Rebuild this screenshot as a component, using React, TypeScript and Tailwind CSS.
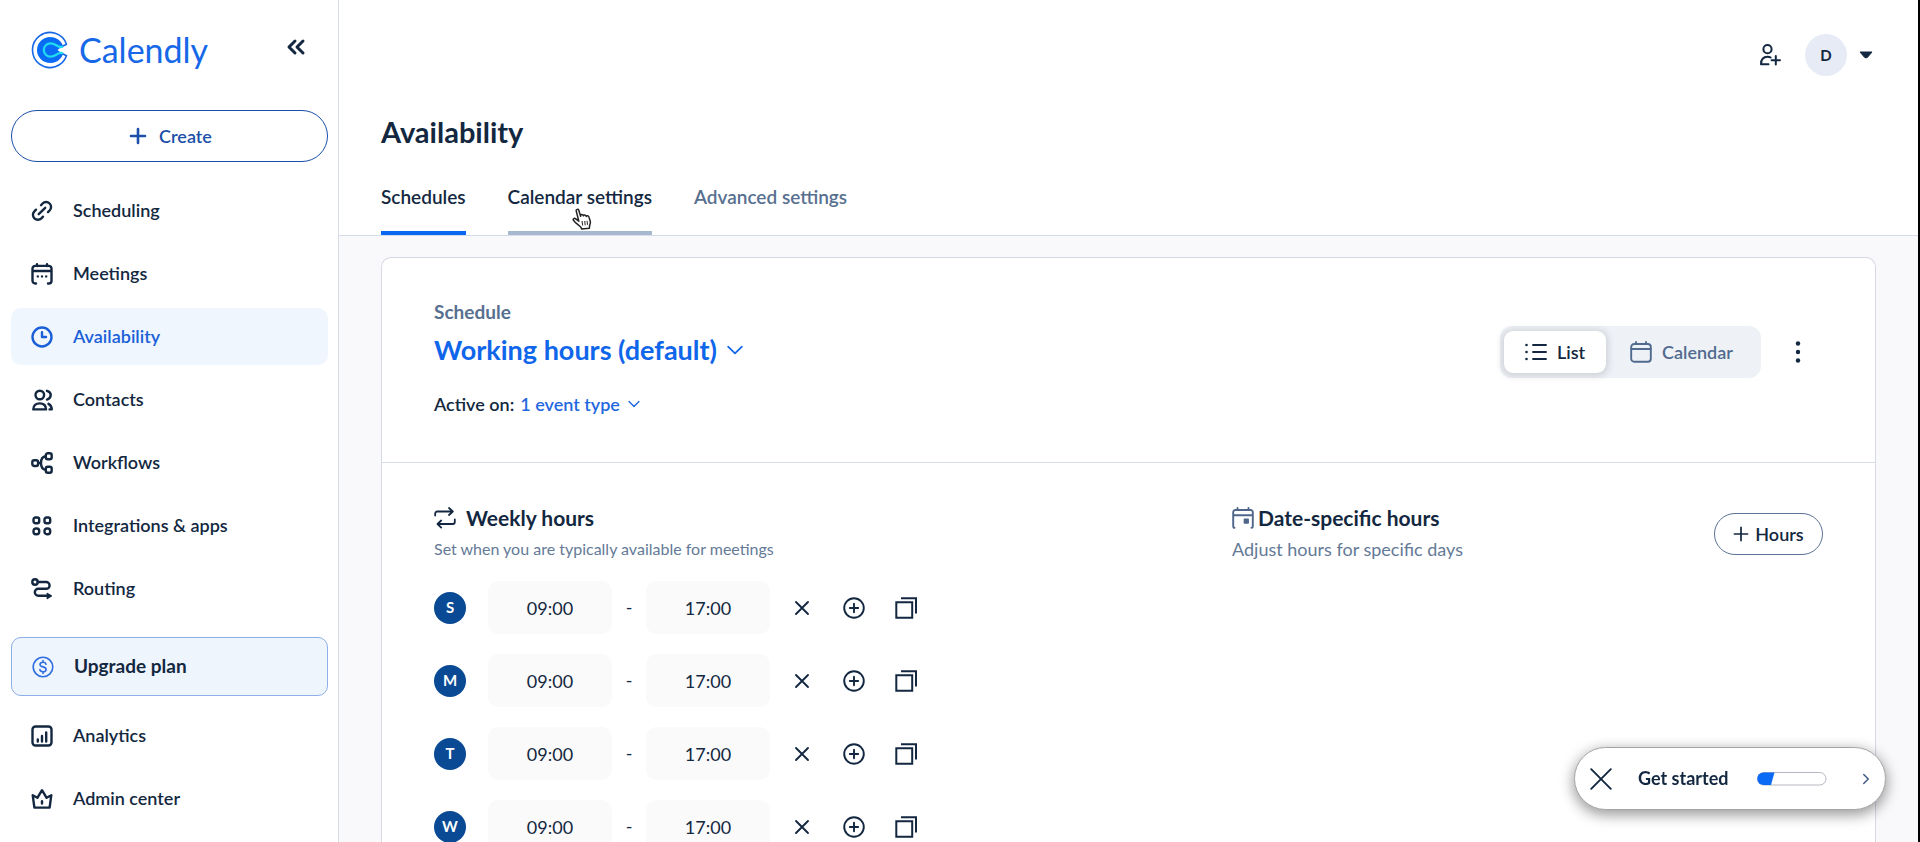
import React from 'react'
import { FiChevronRight } from 'react-icons/fi'

type IconProps = { children: React.ReactNode; className?: string; sw?: number }

function Icon({ children, className = 'size-[22px]', sw = 2.4 }: IconProps) {
  return (
    <svg
      viewBox="0 0 22 22"
      className={className}
      fill="none"
      stroke="currentColor"
      strokeWidth={sw}
      strokeLinecap="round"
      strokeLinejoin="round"
      aria-hidden="true"
    >
      {children}
    </svg>
  )
}

const mainLinks = [
  {
    label: 'Scheduling',
    icon: (
      <>
        <path d="M10 5.2l1.6-1.7a4.9 4.9 0 0 1 7 0a4.9 4.9 0 0 1 0 7l-1.6 1.6" />
        <path d="M5 9.7l-1.6 1.6a4.9 4.9 0 0 0 0 7a4.9 4.9 0 0 0 7 0l1.6-1.6" />
        <path d="M7.7 14.2l6.5-6.4" />
      </>
    ),
  },
  {
    label: 'Meetings',
    icon: (
      <>
        <path d="M5 20.5H4.2A2.7 2.7 0 0 1 1.5 17.8V5.6A2.7 2.7 0 0 1 4.2 2.9H17.8A2.7 2.7 0 0 1 20.5 5.6V17.8A2.7 2.7 0 0 1 17.8 20.5H17M1.5 8H20.5M6 1.3V3M16 1.3V3" />
        <path d="M6.8 13.4h.01M11 13.4h.01M15.2 13.4h.01" />
      </>
    ),
  },
  {
    label: 'Availability',
    icon: (
      <>
        <circle cx="11" cy="11" r="9.5" />
        <path d="M11 6.2V11H15" />
      </>
    ),
  },
  {
    label: 'Contacts',
    icon: (
      <>
        <circle cx="8.8" cy="6" r="4.3" />
        <path d="M2.3 20.4C2.3 16.4 5 14.4 8.7 14.4S15 16.4 15 20.4Z" />
        <path d="M16 1.8C21 3.2 21 8.8 16 10.6M17.5 14.8C19.6 15.8 20.6 17.6 20.8 20.4H18.6" />
      </>
    ),
  },
  {
    label: 'Workflows',
    icon: (
      <>
        <rect x="1.3" y="8.2" width="5.8" height="5.8" rx="2" />
        <rect x="14.8" y="1.3" width="5.9" height="5.9" rx="2" />
        <rect x="14.8" y="14.8" width="5.9" height="5.9" rx="2" />
        <path d="M14.8 4.2C11.4 4.5 10 6.4 10 11S11.4 17.5 14.8 17.8M7.1 11H10" />
      </>
    ),
  },
  {
    label: 'Integrations & apps',
    icon: (
      <>
        <rect x="2.5" y="2.5" width="5.7" height="5.7" rx="2" />
        <rect x="13.5" y="2.5" width="5.7" height="5.7" rx="2" />
        <rect x="2.5" y="13.5" width="5.7" height="5.7" rx="2.4" />
        <rect x="13.5" y="13.5" width="5.7" height="5.7" rx="2.4" />
      </>
    ),
  },
  {
    label: 'Routing',
    icon: (
      <>
        <circle cx="4" cy="4" r="2.7" />
        <path d="M6.8 4H15.2A3.4 3.4 0 0 1 15.2 10.8H7.3A3.5 3.5 0 0 0 7.3 17.8H18" />
        <path d="M16.3 15.5L20.3 17.9L16.3 20.5Z" fill="currentColor" strokeWidth="1.4" />
      </>
    ),
  },
]

const moreLinks = [
  {
    label: 'Analytics',
    icon: (
      <>
        <rect x="1.5" y="1.5" width="19" height="19" rx="3" />
        <path d="M6.8 14.5V16.5M11 11V16.5M15.2 7.5V16.5" />
      </>
    ),
  },
  {
    label: 'Admin center',
    icon: (
      <>
        <path d="M1.7 7.2L6.4 9.8L11 2.2L15.6 9.8L20.3 7.2L18.6 19.6H3.4Z" />
        <path d="M11 13.3V15.5" />
      </>
    ),
  },
]

const days = [
  { letter: 'S', name: 'Sunday' },
  { letter: 'M', name: 'Monday' },
  { letter: 'T', name: 'Tuesday' },
  { letter: 'W', name: 'Wednesday' },
]

function NavLink({ label, icon }: { label: string; icon: React.ReactNode }) {
  const active = label === 'Availability'
  return (
    <a
      href="#"
      className={
        active
          ? 'flex h-[57px] items-center gap-5 rounded-[10px] bg-[#eff6fe] pl-5 text-[18px] font-semibold text-[#1a5fd8]'
          : 'flex h-[57px] items-center gap-5 rounded-[10px] pl-5 text-[18px] font-semibold text-[#132840]'
      }
    >
      <Icon>{icon}</Icon>
      {label}
    </a>
  )
}

function Sidebar() {
  return (
    <aside className="w-[339px] shrink-0 border-r border-[#d6dde6] pr-[10px] pl-[11px]">
      <div className="flex h-[110px] items-start justify-between pt-[30px] pr-[22px] pl-5">
        <a href="#" className="flex items-center gap-[10px] text-[#1668e8]">
          <svg viewBox="0 0 38 38" className="size-[38px]" fill="none" aria-hidden="true">
            <path
              d="M35.5 13.2A17.5 17.5 0 1 0 35.5 24.8L31.5 22.8C29.6 27.5 25.2 31 19.5 31A12 12 0 0 1 19.5 7C25.2 7 29.6 10.5 31.5 15.2Z"
              fill="#fff"
              stroke="#1668e8"
              strokeWidth="1.6"
              strokeLinejoin="round"
            />
            <path
              d="M27.5 9.6A12.8 12.8 0 1 0 27.5 28.4C29.8 26.4 30.9 24.6 31.5 22.8L26.5 19L31.5 15.2C30.9 13.4 29.8 11.6 27.5 9.6Z"
              fill="#0a6bf5"
            />
            <path
              d="M32 15.6C27 18 25.5 12.3 19.5 12.3A6.7 6.7 0 0 0 19.5 25.7C25.5 25.7 27 20 32 22.4"
              stroke="#1fdcf0"
              strokeWidth="2.2"
            />
          </svg>
          <span className="text-[34px] leading-10">Calendly</span>
        </a>
        <button type="button" aria-label="Collapse menu" className="mt-[6px] text-[#132840]">
          <Icon sw={3}>
            <path d="M11 5L5 11L11 17M19 5L13 11L19 17" />
          </Icon>
        </button>
      </div>
      <button
        type="button"
        className="flex h-[52px] w-full items-center justify-center gap-[10px] rounded-full border border-[#1b4fa8] text-[18px] font-semibold text-[#1b4fa8]"
      >
        <Icon sw={2.6}>
          <path d="M11 4V18M4 11H18" />
        </Icon>
        Create
      </button>
      <nav className="mt-5 flex flex-col gap-[6px]">
        {mainLinks.map((l) => (
          <NavLink key={l.label} label={l.label} icon={l.icon} />
        ))}
      </nav>
      <a
        href="#"
        className="mt-5 flex h-[59px] items-center gap-5 rounded-[10px] border border-[#8eaee8] bg-[#eff5fd] pl-5 text-[19px] font-bold text-[#132840]"
      >
        <span className="text-[#2f6fe0]">
          <Icon sw={1.6}>
            <circle cx="11" cy="11" r="9.8" />
            <path d="M14 8.2C13.6 6.8 12.5 6.3 11 6.3C9.2 6.3 8 7.2 8 8.6C8 10.2 9.4 10.6 11 10.9S14.1 11.7 14.1 13.4C14.1 14.9 12.8 15.7 11 15.7S8.1 15.1 7.9 13.6M11 4.6V6.3M11 15.7V17.4" />
          </Icon>
        </span>
        Upgrade plan
      </a>
      <nav className="mt-[11px] flex flex-col gap-[6px]">
        {moreLinks.map((l) => (
          <NavLink key={l.label} label={l.label} icon={l.icon} />
        ))}
      </nav>
    </aside>
  )
}

function PageHeader() {
  return (
    <header className="border-b border-[#d6dde9] bg-white pr-[45px] pl-[42px]">
      <div className="flex h-[110px] items-center justify-end gap-6">
        <button type="button" aria-label="Invite user" className="text-[#132840]">
          <Icon sw={2}>
            <circle cx="8.5" cy="5.2" r="4.1" />
            <path d="M9.5 20.3H2C2 15 4.8 12.8 8.5 12.8C9.8 12.8 10.8 13 11.6 13.5M16.8 12V20.4M12.6 16.2H21" />
          </Icon>
        </button>
        <button type="button" className="flex items-center gap-3 text-[15px] font-bold text-[#132840]">
          <span className="flex size-[42px] items-center justify-center rounded-full bg-[#e6ebf5]">D</span>
          <svg viewBox="0 0 14 8" className="h-2 w-[14px]" aria-hidden="true">
            <path d="M1 1H13L8.5 6.3Q7 7.5 5.5 6.3Z" fill="currentColor" stroke="currentColor" />
          </svg>
        </button>
      </div>
      <h1 className="h-[44px] text-[29px] leading-[44px] font-bold text-[#132840]">Availability</h1>
      <div role="tablist" className="flex h-[81px] items-end gap-[42px] text-[19px] leading-6 font-semibold">
        <button type="button" role="tab" aria-selected="true" className="border-b-4 border-[#0a69f0] pb-[22px] text-[#132840]">
          Schedules
        </button>
        <button type="button" role="tab" aria-selected="false" className="relative border-b-4 border-[#a6b8d0] pb-[22px] text-[#132840]">
          Calendar settings
          <svg viewBox="0 0 20 22" className="absolute top-[23px] left-[64px] h-[22px] w-5" aria-hidden="true">
            <path
              d="M6.8 13.2L4.2 2.9C3.8 1.3 6.2.6 6.8 2.2L8.6 8.2C8.3 6.3 10.9 6 11.4 7.8C11.6 6.5 13.8 6.6 14.2 8.4C14.6 7.3 16.6 7.5 17 9.2L18.3 13.5C18.7 15.4 17.8 16.8 17.5 18L17.4 20.2L9.6 21L9 19.2C7.4 17.8 4.9 15.6 3.2 14.3L1.4 12.2C.6 10.8 2.3 9.8 3.8 10.8Z"
              fill="#fff"
              stroke="#222"
              strokeWidth="1.5"
              strokeLinejoin="round"
            />
            <path d="M10 13L10.7 17.5M12.7 13L13.2 17.3M15 12.8L15.5 16.8" stroke="#222" strokeWidth="1" />
          </svg>
        </button>
        <button type="button" role="tab" aria-selected="false" className="border-b-4 border-transparent pb-[22px] text-[#58708f]">
          Advanced settings
        </button>
      </div>
    </header>
  )
}

function ScheduleHead() {
  return (
    <div className="flex items-start justify-between border-b border-[#d9dde6] pt-[42px] pr-[66px] pb-[44px] pl-[52px]">
      <div>
        <p className="text-[19px] leading-6 font-bold text-[#58708f]">Schedule</p>
        <button type="button" className="mt-2 flex items-center gap-[10px] text-[27px] leading-9 font-bold text-[#0f66ea]">
          Working hours (default)
          <Icon className="size-4" sw={2.4}>
            <path d="M1.5 6.5L11 15.5L20.5 6.5" />
          </Icon>
        </button>
        <p className="mt-[22px] flex items-center gap-[6px] text-[18px] leading-7 font-semibold text-[#132840]">
          Active on:
          <button type="button" className="flex items-center gap-2 text-[#1f68e0]">
            1 event type
            <Icon className="size-3" sw={2.6}>
              <path d="M2 6.5L11 15.5L20 6.5" />
            </Icon>
          </button>
        </p>
      </div>
      <div className="mt-[26px] flex items-center gap-[26px]">
        <div className="flex h-[52px] w-[261px] items-center rounded-[12px] bg-[#eef1f6] p-1 text-[18px] font-semibold">
          <button
            type="button"
            className="flex h-[42px] w-[102px] items-center justify-center gap-[10px] rounded-[9px] bg-white text-[#132840] shadow-[0_1px_7px_2px_rgba(60,60,70,0.18)]"
          >
            <Icon sw={1.9}>
              <path d="M8 4H21M8 11H21M8 18H21" />
              <path d="M1.5 4H1.51M1.5 11H1.51M1.5 18H1.51" strokeWidth="2.6" />
            </Icon>
            List
          </button>
          <button type="button" className="flex flex-1 items-center justify-center gap-[10px] text-[#506b8e]">
            <Icon sw={1.9}>
              <rect x="1.2" y="3" width="19.6" height="17.8" rx="3" />
              <path d="M1.2 8H20.8M6 1V3M16 1V3" />
            </Icon>
            Calendar
          </button>
        </div>
        <button type="button" aria-label="More options" className="text-[#132840]">
          <svg viewBox="0 0 22 22" className="size-[22px]" fill="currentColor" aria-hidden="true">
            <circle cx="11" cy="2.5" r="2.2" />
            <circle cx="11" cy="11" r="2.2" />
            <circle cx="11" cy="19.5" r="2.2" />
          </svg>
        </button>
      </div>
    </div>
  )
}

function DayRow({ letter, name }: { letter: string; name: string }) {
  return (
    <li className="flex h-[53px] items-center text-[#132840]">
      <span className="mr-[22px] flex size-8 items-center justify-center rounded-full bg-[#0a4a94] text-[15px] font-bold text-white">
        {letter}
      </span>
      <input
        aria-label={name + ' start'}
        defaultValue="09:00"
        className="h-[53px] w-[124px] rounded-[10px] bg-[#fafafb] text-center text-[18px]"
      />
      <span className="w-[34px] text-center text-[18px]">-</span>
      <input
        aria-label={name + ' end'}
        defaultValue="17:00"
        className="h-[53px] w-[124px] rounded-[10px] bg-[#fafafb] text-center text-[18px]"
      />
      <div className="ml-[21px] flex gap-[30px]">
        <button type="button" aria-label={'Remove ' + name + ' hours'}>
          <Icon sw={1.9}>
            <path d="M5 5L17 17M17 5L5 17" />
          </Icon>
        </button>
        <button type="button" aria-label={'Add ' + name + ' hours'}>
          <Icon sw={1.9}>
            <circle cx="11" cy="11" r="9.8" />
            <path d="M11 6.8V15.2M6.8 11H15.2" />
          </Icon>
        </button>
        <button type="button" aria-label={'Copy ' + name + ' hours'}>
          <Icon sw={2}>
            <path d="M1.3 5.2H17.2V20.8H1.3ZM6 1.3H21V16.5" strokeLinecap="butt" strokeLinejoin="miter" />
          </Icon>
        </button>
      </div>
    </li>
  )
}

function Hours() {
  return (
    <div className="grid grid-cols-[798fr_591fr] px-[52px] pt-[39px]">
      <section>
        <h2 className="flex items-center gap-[10px] text-[21px] leading-8 font-bold text-[#132840]">
          <Icon sw={1.8}>
            <path d="M1.2 8.5V6.5A2 2 0 0 1 3.2 4.5H18.5M15 1L18.8 4.5L15 8M20.8 12.5V15A2 2 0 0 1 18.8 17H3.8M7.2 13.5L3.5 17L7.2 20.6" />
          </Icon>
          Weekly hours
        </h2>
        <p className="mt-[3px] text-[16px] leading-6 text-[#647a97]">
          Set when you are typically available for meetings
        </p>
        <ul className="mt-5 flex flex-col gap-5">
          {days.map((d) => (
            <DayRow key={d.name} letter={d.letter} name={d.name} />
          ))}
        </ul>
      </section>
      <section className="flex items-start justify-between">
        <div>
          <h2 className="flex items-center gap-1 text-[21px] leading-8 font-bold text-[#132840]">
            <span className="text-[#4d668a]">
              <Icon sw={1.9}>
                <path d="M2.5 20.8Q1.2 20.8 1.2 19V5.2A2.2 2.2 0 0 1 3.4 3H18.6A2.2 2.2 0 0 1 20.8 5.2V19Q20.8 20.8 19.5 20.8M1.2 8.3H20.8M5.5 1V3M16.5 1V3" />
                <rect x="12.6" y="12.4" width="3.4" height="3.4" fill="currentColor" />
              </Icon>
            </span>
            Date-specific hours
          </h2>
          <p className="mt-[3px] text-[18px] leading-6 text-[#647a97]">Adjust hours for specific days</p>
        </div>
        <button
          type="button"
          className="mt-[11px] flex h-[42px] w-[109px] items-center justify-center gap-[6px] rounded-full border border-[#5b7394] text-[18px] font-semibold text-[#132840]"
        >
          <Icon className="size-4" sw={2.4}>
            <path d="M11 2V20M2 11H20" />
          </Icon>
          Hours
        </button>
      </section>
    </div>
  )
}

function GetStarted() {
  return (
    <div className="fixed right-[34px] bottom-[32px] flex h-[63px] w-[312px] items-center rounded-full border border-[#a5a5a8] bg-white pr-[10px] pl-[15px] text-[#132840] shadow-[0_4px_14px_1px_rgba(0,0,0,0.4)]">
      <button type="button" aria-label="Dismiss">
        <Icon sw={1.9}>
          <path d="M1.2 1.2L20.8 20.8M20.8 1.2L1.2 20.8" />
        </Icon>
      </button>
      <span className="ml-[26px] w-[119px] text-[18px] font-bold">Get started</span>
      <svg viewBox="0 0 70 14" className="h-[14px] w-[70px]" aria-hidden="true">
        <rect x="0.5" y="0.5" width="68.5" height="12.5" rx="6.2" fill="#fff" stroke="#b4b8be" />
        <path d="M6.5 0.5H17.5L14 13H6.5A6.2 6.2 0 0 1 6.5 0.5Z" fill="#0a69f5" />
      </svg>
      <button type="button" aria-label="Open checklist" className="ml-auto text-[#3f5a80]">
        <FiChevronRight className="size-[18px]" />
      </button>
    </div>
  )
}

export default function App() {
  return (
    <div className="flex h-screen overflow-hidden border-r-2 border-black bg-white font-['Lato',sans-serif]">
      <Sidebar />
      <main className="flex min-w-0 flex-1 flex-col bg-[#f9f9fb]">
        <PageHeader />
        <div className="flex-1 pt-[21px] pr-[42px] pl-[42px]">
          <div className="min-h-full rounded-t-[10px] border border-b-0 border-[#d5d9e6] bg-white">
            <ScheduleHead />
            <Hours />
          </div>
        </div>
      </main>
      <GetStarted />
    </div>
  )
}
